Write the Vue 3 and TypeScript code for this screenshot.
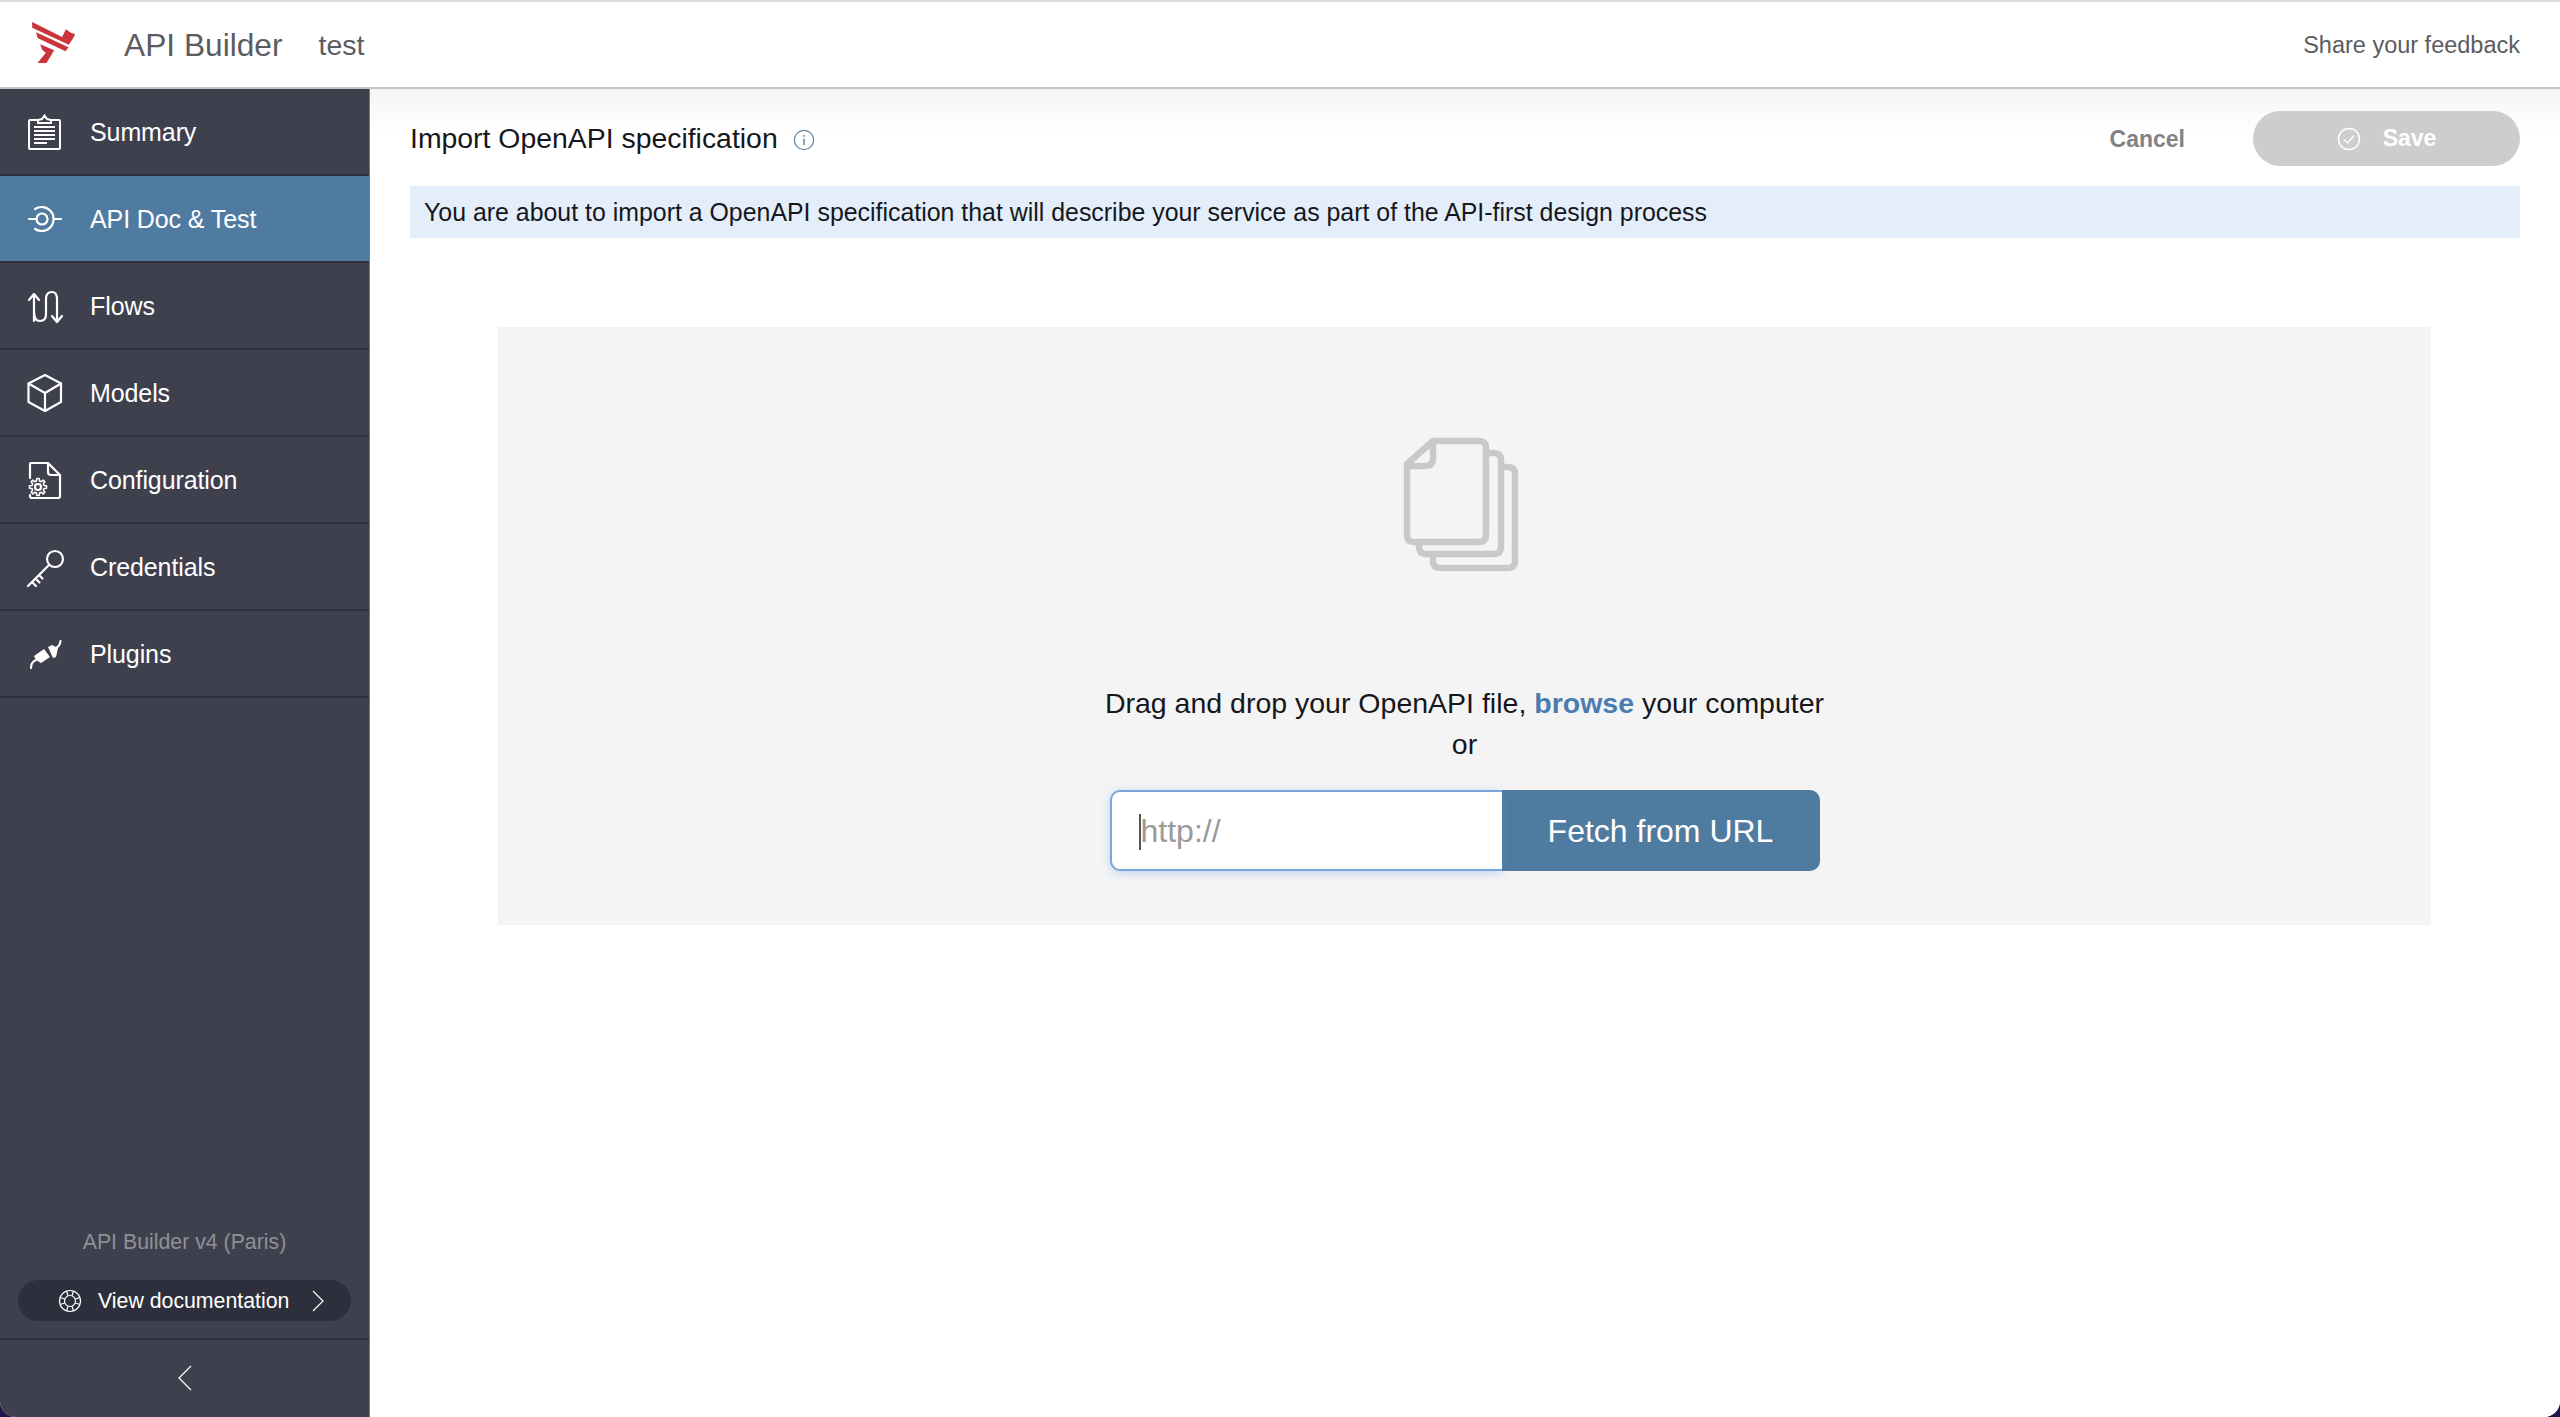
<script setup lang="ts">
const items = ['Summary', 'API Doc & Test', 'Flows', 'Models', 'Configuration', 'Credentials', 'Plugins']

function gearPath(cx: number, cy: number, outer: number, inner: number, teeth: number): string {
  const pts: string[] = []
  const step = (Math.PI * 2) / teeth
  for (let t = 0; t < teeth; t++) {
    const a = t * step
    const corners: [number, number][] = [
      [inner, a - step * 0.32],
      [outer, a - step * 0.18],
      [outer, a + step * 0.18],
      [inner, a + step * 0.32],
    ]
    for (const [r, ang] of corners) {
      pts.push(`${(cx + r * Math.cos(ang)).toFixed(2)} ${(cy + r * Math.sin(ang)).toFixed(2)}`)
    }
  }
  return `M${pts.join(' L')} Z`
}
const gear = gearPath(11, 25, 8.6, 6.2, 8)
</script>

<template>
  <div class="app">
    <header class="top">
      <svg class="logo" viewBox="90 52 140 135" width="47" height="45">
        <path fill="#c8363c" d="M96 58 L186 103 L197 80 L212 90 L225 95 L218 108 L206 126 L96 75 Z" />
        <path fill="#c8363c" d="M108 89 L205 134 L196 146 L112 106 Z" />
        <path fill="#c8363c" d="M120 125 L162 143 L139 181 L112 181 L137 150 L126 141 Z" />
      </svg>
      <span class="brand">API Builder</span>
      <span class="project">test</span>
      <span class="feedback">Share your feedback</span>
    </header>
    <div class="body">
      <aside class="side">
        <nav>
          <a v-for="(item, i) in items" :key="item" class="item" :class="{ active: i === 1 }">
            <svg class="ico" viewBox="0 0 36 36" width="36" height="36">
              <g v-if="i === 0" class="st">
                <path d="M11 6 H3 Q2 6 2 7 V34 Q2 35 3 35 H32 Q33 35 33 34 V7 Q33 6 32 6 H24" />
                <path d="M11 9 V6 L15 5 L17.500 1.500 L20 5 L24 6 V9 Z" />
                <path d="M7 13 H28 M7 17 H28 M7 21 H28 M7 25 H28 M7 29 H20" />
              </g>
              <g v-else-if="i === 1" class="st wide">
                <circle cx="15" cy="18" r="5.500" />
                <path d="M2 18 H9.500" />
                <path d="M8 8 A12 12 0 1 1 8 28" />
                <path d="M27 18 H34" />
              </g>
              <g v-else-if="i === 2" class="st wide">
                <path d="M7 33 V7 M2 12 L7 6 L12 12" />
                <path d="M7 24 Q7 33 13 33 Q19 33 19 26 V11 Q19 4 25 4 Q30 4 30 11 V33" />
                <path d="M25 28 L30 34 L35 28" />
              </g>
              <g v-else-if="i === 3" class="st wide">
                <path d="M18 0 L34 8.500 V27 L18 36 L1.500 27 V8.500 Z" />
                <path d="M1.500 8.500 L18 18 L34 8.500 M18 18 V36" />
              </g>
              <g v-else-if="i === 4" class="st wide">
                <path d="M3 16 V2 Q3 1 4 1 H21 L33 13 V34 Q33 36 31 36 H5 Q3 36 3 34 V33" />
                <path d="M21 1 V10 Q21 13 24 13 H33" />
                <circle cx="11" cy="25" r="3" />
                <path :d="gear" stroke-width="1.600" />
              </g>
              <g v-else-if="i === 5" class="st wide">
                <circle cx="28" cy="10" r="8" />
                <path d="M22 16 L1 37 M5 33 L9 37 M8.500 29.500 L12.500 33.500 M12 26 L15.500 29.500" />
              </g>
              <g v-else>
                <path fill="#fff" d="M17 13 L23 21 L14 27 L9 24 L7 20 Z M21 11 L25 9 L31 12 L29 21 L26 22 Z" />
                <path d="M4 32 Q4 26 9 24 M29 12 Q33 10 33.500 5" class="st wide" />
              </g>
            </svg>
            <span class="label">{{ item }}</span>
          </a>
        </nav>
        <div class="foot">
          <div class="ver">API Builder v4 (Paris)</div>
          <a class="doc">
            <svg viewBox="0 0 24 24" width="24" height="24" class="st thin">
              <circle cx="12" cy="12" r="10.500" />
              <circle cx="12" cy="12" r="5.500" />
              <path d="M8.500 2 L10 6.800 M15.500 2 L14 6.800 M8.500 22 L10 17.200 M15.500 22 L14 17.200 M2 8.500 L6.800 10 M2 15.500 L6.800 14 M22 8.500 L17.200 10 M22 15.500 L17.200 14" />
            </svg>
            <span>View documentation</span>
            <svg viewBox="0 0 14 24" width="14" height="24" class="st thin"><path d="M2 2 L12 12 L2 22" /></svg>
          </a>
        </div>
        <div class="collapse">
          <svg viewBox="0 0 14 26" width="14" height="26" class="st thin"><path d="M13 1 L1 13 L13 25" /></svg>
        </div>
      </aside>
      <main class="main">
        <div class="bar">
          <h1>Import OpenAPI specification</h1>
          <svg class="info" viewBox="0 0 24 24" width="22" height="22">
            <circle cx="12" cy="12" r="10.500" fill="none" stroke="#5e87a8" stroke-width="1.300" />
            <path d="M12 10.500 V17.500" stroke="#5e87a8" stroke-width="1.600" />
            <circle cx="12" cy="7.500" r="1" fill="#5e87a8" />
          </svg>
          <span class="cancel">Cancel</span>
          <button class="save">
            <svg viewBox="0 0 24 24" width="24" height="24" fill="none" stroke="#fff" stroke-width="1.500">
              <circle cx="12" cy="12" r="10.500" />
              <path d="M7 12.500 L10.500 16 L17 8.500" />
            </svg>
            <span>Save</span>
          </button>
        </div>
        <div class="banner">You are about to import a OpenAPI specification that will describe your service as part of the API-first design process</div>
        <section class="drop">
          <svg class="files" viewBox="0 0 116 138" width="116" height="138" fill="none" stroke="#c9c9c9" stroke-width="6.500" stroke-linejoin="round">
            <path d="M30 5 H76 Q83 5 83 12 V99 Q83 106 76 106 H11 Q4 106 4 99 V28 Z" />
            <path d="M30 5 V22 Q30 30 22 30 H4" />
            <path d="M83 17 H91 Q98 17 98 24 V111 Q98 118 91 118 H23 Q16 118 16 111 V106" />
            <path d="M98 31 H105 Q112 31 112 38 V125 Q112 132 105 132 H37 Q30 132 30 125 V118" />
          </svg>
          <p class="hint">Drag and drop your OpenAPI file, <b>browse</b> your computer</p>
          <p class="or">or</p>
          <div class="fetch">
            <div class="field">
              <input type="text" placeholder="http://" />
            </div>
            <button class="go">Fetch from URL</button>
          </div>
        </section>
      </main>
    </div>
  </div>
</template>

<style>
html, body { margin: 0; background: #1f1650; }
</style>

<style scoped>
* { box-sizing: border-box; }
.app {
  width: 2560px; height: 1417px; display: flex; flex-direction: column;
  font-family: "Liberation Sans", Arial, sans-serif; overflow: hidden;
  border-radius: 0 0 16px 16px; background: #fff;
}
.top {
  height: 89px; flex: none; display: flex; align-items: center;
  border-top: 2px solid #dcdcdc; border-bottom: 2px solid #c4c5c7;
  padding: 0 40px 0 30px; background: #fff; color: #5b5c60;
}
.logo { flex: none; margin-top: -4px; }
.brand { font-size: 31.700px; margin-left: 47px; padding-top: 1px; }
.project { font-size: 28.500px; margin-left: 36px; padding-top: 1px; }
.feedback { font-size: 23.500px; margin-left: auto; padding-top: 1px; }
.body { flex: 1; display: flex; min-height: 0; }
.side {
  width: 370px; flex: none; background: #3f404e; display: flex; flex-direction: column;
  border-right: 1px solid #7a7b83; color: #fff;
}
.item {
  height: 87px; display: flex; align-items: center; padding-left: 27px;
  border-bottom: 2px solid #2e303d; font-size: 25px; letter-spacing: -0.1px;
}
.label { padding-top: 2px; }
.item.active { background: #507ba0; }
.ico { flex: none; margin-right: 27px; overflow: visible; }
.st { fill: none; stroke: #fff; stroke-width: 2; }
.st.wide { stroke-width: 2.200; stroke-linecap: round; stroke-linejoin: round; }
.st.thin { stroke-width: 1.200; }
.foot { margin-top: auto; padding: 0 18px 17px; border-bottom: 2px solid #2e303d; }
.ver { text-align: center; color: #8f9097; font-size: 21.300px; line-height: 26px; margin-bottom: 25px; padding-top: 1px; }
.doc {
  height: 41px; border-radius: 21px; background: #2d303c; display: flex; align-items: center;
  padding: 0 26px 0 40px; font-size: 21.300px; color: #fff;
}
.doc span { margin-left: 16px; margin-right: auto; white-space: nowrap; padding-top: 1px; }
.collapse { height: 77px; display: flex; align-items: center; justify-content: center; padding-bottom: 2px; }
.main { flex: 1; min-width: 0; padding: 0 40px; background: linear-gradient(#f5f5f5 0, #fff 44px, #fff 100%); }
.bar { height: 97px; display: flex; align-items: center; padding-top: 2px; }
h1 { margin: 0; font-weight: 400; font-size: 28.400px; color: #16171b; }
.info { margin-left: 15px; margin-top: 2px; }
.cancel { margin-left: auto; font-weight: 700; font-size: 23px; color: #808285; margin-right: 68px; padding-top: 2px; }
.save {
  width: 267px; height: 55px; border: 0; border-radius: 28px; background: #cccdcf; color: #fff;
  font: 700 23px "Liberation Sans", Arial, sans-serif; display: flex; align-items: center; justify-content: center; gap: 22px;
}
.banner {
  height: 52px; line-height: 52px; padding-left: 14px; background: #e4eefa; color: #16171b; font-size: 24.900px;
  white-space: nowrap;
}
.drop {
  margin: 89px 89px 0 88px; height: 598px; background: #f4f4f5; display: flex; flex-direction: column; align-items: center;
  padding-top: 109px; color: #16171b;
}
.files { flex: none; margin-left: -8px; }
.hint { margin: 111px 0 0; font-size: 28.500px; line-height: 36px; }
.hint b { color: #4a7cb0; }
.or { margin: 5px 0 0; font-size: 28.500px; line-height: 36px; }
.fetch { display: flex; margin-top: 28px; height: 81px; }
.field { position: relative; width: 392px; }
.field::before {
  content: ""; position: absolute; left: 29px; top: 24px; width: 2px; height: 36px; background: #555;
}
.field input {
  width: 100%; height: 100%; border: 2px solid #79a6dc; border-right: 0; border-radius: 10px 0 0 10px;
  box-shadow: 0 2px 10px rgba(90, 150, 230, .35); outline: none; background: #fff;
  padding: 2px 0 0 29px; font: 32px "Liberation Sans", Arial, sans-serif;
}
.field input::placeholder { color: #9a9a9a; }
.go {
  width: 318px; border: 0; border-radius: 0 10px 10px 0; background: #507ba0; color: #fff; padding-top: 2px;
  font: 32px "Liberation Sans", Arial, sans-serif;
}
</style>
